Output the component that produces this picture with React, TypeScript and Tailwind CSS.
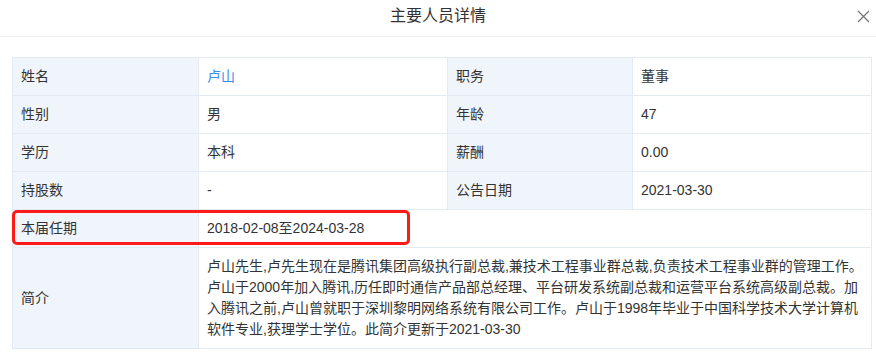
import React from "react";

const font = { fontFamily: '"Liberation Sans", "Noto Sans CJK SC", sans-serif' };

const label = "bg-[#f0f5fc] border border-[#e3eaf3] px-2 text-[#333333] align-middle";
const value = "bg-white border border-[#e3eaf3] px-2 text-[#333333] align-middle";

export default function App() {
  return (
    <div className="w-[876px] h-[360px] bg-white overflow-hidden text-[14px]" style={font}>
      <div className="relative h-[37px] border-b border-[#eef0f3] flex items-center justify-center">
        <span className="text-[16px] text-[#333333] leading-none -mt-[4px]">主要人员详情</span>
        <button className="absolute right-[6px] top-[9px] w-[14px] h-[14px] flex items-center justify-center text-[#777777]">
          <svg width="13" height="13" viewBox="0 0 13 13" fill="none" stroke="currentColor" strokeWidth="1.3">
            <path d="M1 1 L12 12 M12 1 L1 12" />
          </svg>
        </button>
      </div>
      <div className="pl-3 pt-[20px]">
        <div className="relative w-[859px]">
          <table className="w-[859px] border-collapse table-fixed">
            <colgroup>
              <col className="w-[186px]" />
              <col className="w-[249px]" />
              <col className="w-[185px]" />
              <col className="w-[239px]" />
            </colgroup>
            <tbody>
              <tr className="h-[38px]">
                <td className={label}>姓名</td>
                <td className={value}><span className="text-[#3d8ef0]">卢山</span></td>
                <td className={label}>职务</td>
                <td className={value}>董事</td>
              </tr>
              <tr className="h-[38px]">
                <td className={label}>性别</td>
                <td className={value}>男</td>
                <td className={label}>年龄</td>
                <td className={value}>47</td>
              </tr>
              <tr className="h-[38px]">
                <td className={label}>学历</td>
                <td className={value}>本科</td>
                <td className={label}>薪酬</td>
                <td className={value}>0.00</td>
              </tr>
              <tr className="h-[38px]">
                <td className={label}>持股数</td>
                <td className={value}>-</td>
                <td className={label}>公告日期</td>
                <td className={value}>2021-03-30</td>
              </tr>
              <tr className="h-[38px]">
                <td className={label}>本届任期</td>
                <td className={value} colSpan={3}>2018-02-08至2024-03-28</td>
              </tr>
              <tr className="h-[101px]">
                <td className={label}>简介</td>
                <td className={value + " py-2 leading-[21px]"} colSpan={3}>
                  卢山先生,卢先生现在是腾讯集团高级执行副总裁,兼技术工程事业群总裁,负责技术工程事业群的管理工作。卢山于2000年加入腾讯,历任即时通信产品部总经理、平台研发系统副总裁和运营平台系统高级副总裁。加入腾讯之前,卢山曾就职于深圳黎明网络系统有限公司工作。卢山于1998年毕业于中国科学技术大学计算机软件专业,获理学士学位。此简介更新于2021-03-30
                </td>
              </tr>
            </tbody>
          </table>
          <div className="absolute left-0 top-[153px] w-[398px] h-[35px] border-[3px] border-[#ff1a1a] rounded-[5px] pointer-events-none" />
        </div>
      </div>
    </div>
  );
}
